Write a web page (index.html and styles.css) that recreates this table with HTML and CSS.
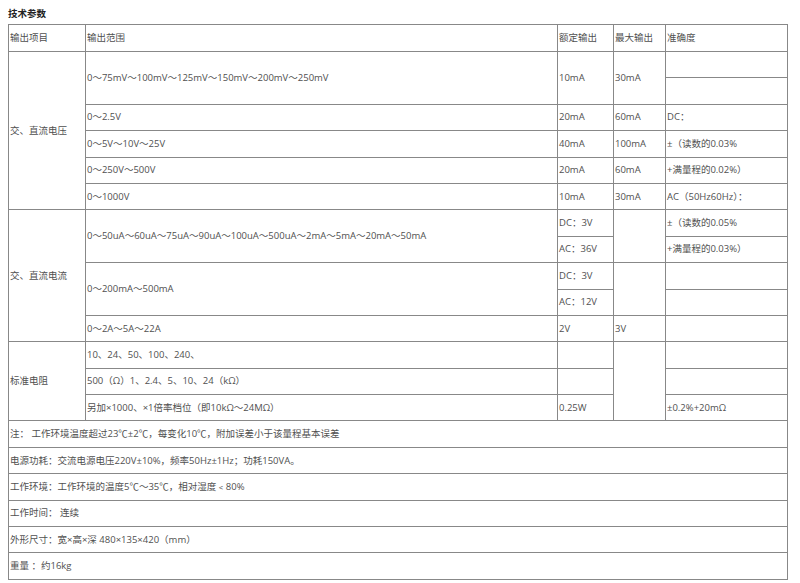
FILE: index.html
```html
<!DOCTYPE html>
<html lang="zh-CN">
<head>
<meta charset="utf-8">
<title>技术参数</title>
<link rel="stylesheet" href="styles.css">
</head>
<body>
<div class="page">
  <h3 class="title">技术参数</h3>
  <table class="spec">
    <colgroup>
      <col class="c1"><col class="c2"><col class="c3"><col class="c4"><col class="c5">
    </colgroup>
    <tbody>
      <tr class="hd"><td>输出项目</td><td>输出范围</td><td>额定输出</td><td>最大输出</td><td>准确度</td></tr>
      <tr><td rowspan="6">交、直流电压</td><td rowspan="2">0～75mV～100mV～125mV～150mV～200mV～250mV</td><td rowspan="2">10mA</td><td rowspan="2">30mA</td><td></td></tr>
      <tr><td></td></tr>
      <tr><td>0～2.5V</td><td>20mA</td><td>60mA</td><td>DC：</td></tr>
      <tr><td>0～5V～10V～25V</td><td>40mA</td><td>100mA</td><td>±（读数的0.03%</td></tr>
      <tr><td>0～250V～500V</td><td>20mA</td><td>60mA</td><td>+满量程的0.02%）</td></tr>
      <tr><td>0～1000V</td><td>10mA</td><td>30mA</td><td>AC（50Hz60Hz）：</td></tr>
      <tr><td rowspan="5">交、直流电流</td><td rowspan="2">0～50uA～60uA～75uA～90uA～100uA～500uA～2mA～5mA～20mA～50mA</td><td>DC：3V</td><td rowspan="2"></td><td>±（读数的0.05%</td></tr>
      <tr><td>AC：36V</td><td>+满量程的0.03%）</td></tr>
      <tr><td rowspan="2">0～200mA～500mA</td><td>DC：3V</td><td rowspan="2"></td><td></td></tr>
      <tr><td>AC：12V</td><td></td></tr>
      <tr><td>0～2A～5A～22A</td><td>2V</td><td>3V</td><td></td></tr>
      <tr><td rowspan="3">标准电阻</td><td>10、24、50、100、240、</td><td></td><td rowspan="3"></td><td></td></tr>
      <tr><td>500（Ω）1、2.4、5、10、24（kΩ）</td><td></td><td></td></tr>
      <tr><td>另加×1000、×1倍率档位（即10kΩ～24MΩ）</td><td>0.25W</td><td>±0.2%+20mΩ</td></tr>
      <tr><td colspan="5">注： 工作环境温度超过23℃±2℃，每变化10℃，附加误差小于该量程基本误差</td></tr>
      <tr><td colspan="5">电源功耗：交流电源电压220V±10%，频率50Hz±1Hz；功耗150VA。</td></tr>
      <tr><td colspan="5">工作环境：工作环境的温度5℃～35℃，相对湿度﹤80%</td></tr>
      <tr><td colspan="5">工作时间： 连续</td></tr>
      <tr><td colspan="5">外形尺寸：宽×高×深 480×135×420（mm）</td></tr>
      <tr><td colspan="5">重量 ：约16kg</td></tr>
    </tbody>
  </table>
</div>
</body>
</html>
```

FILE: styles.css
```css
html, body {
  margin: 0;
  padding: 0;
  background: #ffffff;
}
.page {
  padding: 7px 8px 0 8px;
  font-family: "Open Sans", "Noto Sans CJK SC", sans-serif;
  font-size: 9.5px;
  color: #505050;
}
.title {
  margin: 0;
  height: 17px;
  line-height: 14px;
  font-size: 9.5px;
  font-weight: bold;
  color: #222222;
}
.spec {
  border-collapse: collapse;
  table-layout: fixed;
  width: 779px;
}
.c1 { width: 77px; }
.c2 { width: 472px; }
.c3 { width: 56px; }
.c4 { width: 52px; }
.c5 { width: 122px; }
.spec td {
  border: 1px solid #888888;
  padding: 0 1px;
  height: 25.4px;
  vertical-align: middle;
  white-space: nowrap;
  overflow: hidden;
  line-height: 14px;
}
.spec tr.hd td {
  height: 26px;
}
```
